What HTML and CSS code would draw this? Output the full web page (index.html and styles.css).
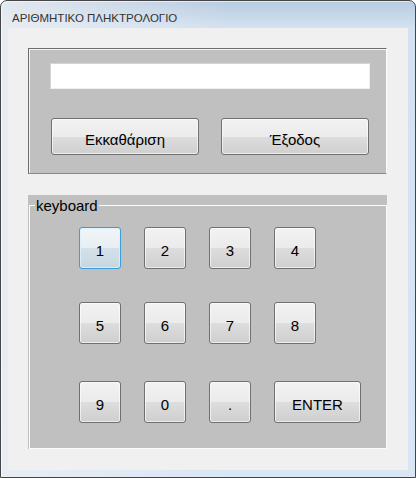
FILE: index.html
```html
<!DOCTYPE html>
<html lang="el">
<head>
    <meta charset="UTF-8">
    <meta name="viewport" content="width=device-width, initial-scale=1.0">
    <title>ΑΡΙΘΜΗΤΙΚΟ ΠΛΗΚΤΡΟΛΟΓΙΟ</title>
    <link rel="stylesheet" href="styles.css">
</head>
<body>

    <div class="window">
        <div class="titlebar">ΑΡΙΘΜΗΤΙΚΟ ΠΛΗΚΤΡΟΛΟΓΙΟ</div>

        <div class="client">
            <!-- Display + actions -->
            <div class="panel">
                <input type="text" class="display" id="display">
                <div class="actions">
                    <button class="btn wide">Εκκαθάριση</button>
                    <button class="btn wide">Έξοδος</button>
                </div>
            </div>

            <!-- Keypad -->
            <div class="group">
                <fieldset class="keyboard">
                    <legend>keyboard</legend>
                    <div class="keys">
                        <div class="row">
                            <button class="btn key focused">1</button>
                            <button class="btn key">2</button>
                            <button class="btn key">3</button>
                            <button class="btn key">4</button>
                        </div>
                        <div class="row">
                            <button class="btn key">5</button>
                            <button class="btn key">6</button>
                            <button class="btn key">7</button>
                            <button class="btn key">8</button>
                        </div>
                        <div class="row last">
                            <button class="btn key">9</button>
                            <button class="btn key">0</button>
                            <button class="btn key">.</button>
                            <button class="btn key enter">ENTER</button>
                        </div>
                    </div>
                </fieldset>
            </div>
        </div>
    </div>

</body>
</html>
```

FILE: styles.css
```css
body {
    margin: 0;
    font-family: "Liberation Sans", Arial, sans-serif;
}
.window {
    width: 416px;
    height: 478px;
    box-sizing: border-box;
    border: 1px solid #454545;
    border-radius: 7px 7px 0 0;
    padding: 0 7px 7px;
    display: flex;
    flex-direction: column;
    background:
        linear-gradient(to right, rgba(236, 239, 243, 0.8), rgba(236, 239, 243, 0) 55%),
        linear-gradient(to bottom, #b7cbe0, #d3e1f0 26px, #dae6f4);
    box-shadow: inset 1px 1px 0 rgba(255, 255, 255, 0.6);
}
.titlebar {
    height: 27px;
    box-sizing: border-box;
    padding: 10px 0 0 4px;
    font-size: 11.5px;
    line-height: 14px;
    color: #333;
}
.client {
    flex: 1;
    background-color: #f0f0f0;
    padding: 20px 0 0 20px;
}
.panel {
    width: 359px;
    height: 126px;
    box-sizing: border-box;
    background-color: #c0c0c0;
    border: 1px solid;
    border-color: #6d6d6d #fdfdfd #8a8a8a #6d6d6d;
    box-shadow: inset 1px 1px 0 #f4f4f4;
}
.display {
    display: block;
    width: 320px;
    height: 26px;
    box-sizing: border-box;
    margin: 14px 0 0 21px;
    border: 1px solid;
    border-color: #d4d4d4 #eeeeee #eeeeee #d4d4d4;
    background-color: #fff;
    outline: none;
}
.actions {
    display: flex;
    gap: 22px;
    margin: 29px 0 0 22px;
}
.btn {
    box-sizing: border-box;
    border: 1px solid #707070;
    border-radius: 3px;
    background: linear-gradient(to bottom, #f2f2f2 0%, #ebebeb 50%, #dddddd 51%, #cfcfcf 100%);
    box-shadow: inset 0 0 0 1px rgba(255, 255, 255, 0.6);
    font-family: "Liberation Sans", Arial, sans-serif;
    font-size: 15px;
    color: #000;
    padding: 5px 0 0;
    cursor: pointer;
}
.btn.wide {
    width: 148px;
    height: 37px;
}
.group {
    width: 359px;
    height: 254px;
    box-sizing: border-box;
    margin-top: 21px;
    padding: 3px 0 0 1px;
    background-color: #c0c0c0;
}
.keyboard {
    width: 358px;
    height: 251px;
    box-sizing: border-box;
    margin: 0;
    padding: 0;
    border: 1px solid #fbfbfb;
}
.keyboard legend {
    margin-left: 5px;
    padding: 0 1px;
    font-size: 15px;
    line-height: 15px;
    color: #000;
}
.keys {
    margin: 14px 0 0 49px;
}
.row {
    display: flex;
    gap: 23px;
}
.row + .row {
    margin-top: 33px;
}
.row.last {
    margin-top: 37px;
}
.key {
    width: 42px;
    height: 42px;
}
.key.enter {
    width: 87px;
}
.key.focused {
    border-color: #3c9ed9;
    background: linear-gradient(to bottom, #f1f5f8 0%, #e8eef3 50%, #d5e1e9 51%, #c7d6df 100%);
    box-shadow: inset 0 0 0 1px rgba(220, 240, 252, 0.8);
}
```
